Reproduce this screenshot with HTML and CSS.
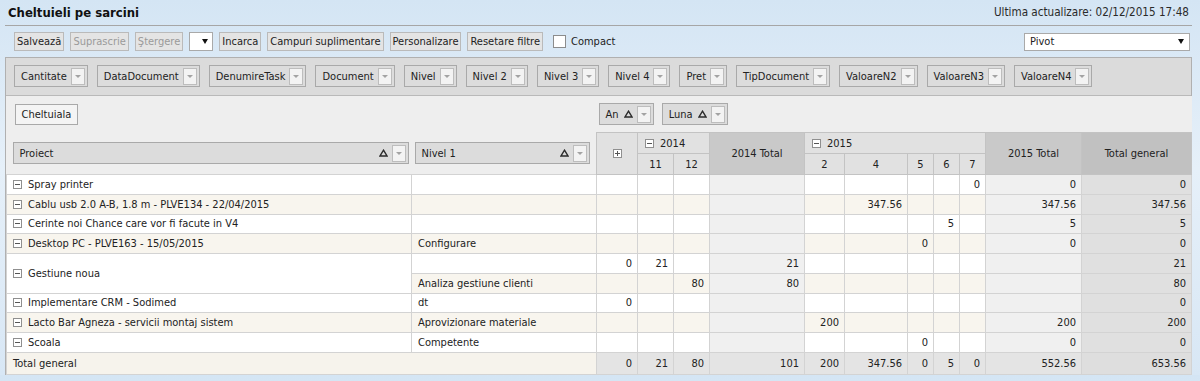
FILE: index.html
```html
<!DOCTYPE html>
<html>
<head>
<meta charset="utf-8">
<title>Cheltuieli pe sarcini</title>
<link rel="stylesheet" href="styles.css">
</head>
<body>
<div class="page">

<div class="header">
  <div class="title">Cheltuieli pe sarcini</div>
  <div class="updated">Ultima actualizare: 02/12/2015 17:48</div>
</div>

<div class="toolbar">
  <div class="actions">
    <span class="btn">Salvează</span>
    <span class="btn off">Suprascrie</span>
    <span class="btn off">Ştergere</span>
    <span class="combo small"><span class="combo-text"></span><span class="combo-arrow"></span></span>
    <span class="btn">Incarca</span>
    <span class="btn">Campuri suplimentare</span>
    <span class="btn">Personalizare</span>
    <span class="btn">Resetare filtre</span>
    <label class="check"><span class="box"></span>Compact</label>
  </div>
  <span class="combo wide"><span class="combo-text">Pivot</span><span class="combo-arrow"></span></span>
</div>

<div class="pivot">
  <div class="filter-area">
    <span class="field">Cantitate<span class="drop"></span></span>
    <span class="field">DataDocument<span class="drop"></span></span>
    <span class="field">DenumireTask<span class="drop"></span></span>
    <span class="field">Document<span class="drop"></span></span>
    <span class="field">Nivel<span class="drop"></span></span>
    <span class="field">Nivel 2<span class="drop"></span></span>
    <span class="field">Nivel 3<span class="drop"></span></span>
    <span class="field">Nivel 4<span class="drop"></span></span>
    <span class="field">Pret<span class="drop"></span></span>
    <span class="field">TipDocument<span class="drop"></span></span>
    <span class="field">ValoareN2<span class="drop"></span></span>
    <span class="field">ValoareN3<span class="drop"></span></span>
    <span class="field">ValoareN4<span class="drop"></span></span>
  </div>

  <table class="grid">
    <colgroup>
      <col class="c-name"><col class="c-lvl">
      <col class="c-exp"><col class="c-m11"><col class="c-m12"><col class="c-t14">
      <col class="c-m2"><col class="c-m4"><col class="c-m5"><col class="c-m6"><col class="c-m7">
      <col class="c-t15"><col class="c-tg">
    </colgroup>
    <tr class="area-row">
      <td colspan="2" class="area data-area"><span class="field light">Cheltuiala</span></td>
      <td colspan="11" class="area col-area">
        <span class="field">An<svg class="sort" width="9" height="8" viewBox="0 0 9 8"><path d="M4.5 1.2 L8 7 H1 Z" fill="none" stroke="#2b2b2b" stroke-width="1.4" stroke-linejoin="miter"/></svg><span class="drop"></span></span>
        <span class="field">Luna<svg class="sort" width="9" height="8" viewBox="0 0 9 8"><path d="M4.5 1.2 L8 7 H1 Z" fill="none" stroke="#2b2b2b" stroke-width="1.4" stroke-linejoin="miter"/></svg><span class="drop"></span></span>
      </td>
    </tr>
    <tr class="hrow">
      <td rowspan="2" class="area row-field first"><span class="field block"><span class="fname">Proiect</span><svg class="sort" width="9" height="8" viewBox="0 0 9 8"><path d="M4.5 1.2 L8 7 H1 Z" fill="none" stroke="#2b2b2b" stroke-width="1.4" stroke-linejoin="miter"/></svg><span class="drop"></span></span></td>
      <td rowspan="2" class="area row-field"><span class="field block"><span class="fname">Nivel 1</span><svg class="sort" width="9" height="8" viewBox="0 0 9 8"><path d="M4.5 1.2 L8 7 H1 Z" fill="none" stroke="#2b2b2b" stroke-width="1.4" stroke-linejoin="miter"/></svg><span class="drop"></span></span></td>
      <th rowspan="2" class="hdr"><span class="tg plus"></span></th>
      <th colspan="2" class="hdr year"><span class="tg"></span>2014</th>
      <th rowspan="2" class="hdr total">2014 Total</th>
      <th colspan="5" class="hdr year"><span class="tg"></span>2015</th>
      <th rowspan="2" class="hdr total">2015 Total</th>
      <th rowspan="2" class="hdr grand">Total general</th>
    </tr>
    <tr class="hrow">
      <th class="hdr">11</th><th class="hdr">12</th>
      <th class="hdr">2</th><th class="hdr">4</th><th class="hdr">5</th><th class="hdr">6</th><th class="hdr">7</th>
    </tr>

    <tr>
      <td class="name"><span class="tg"></span>Spray printer</td><td class="lvl"></td>
      <td></td><td></td><td></td><td class="tot"></td>
      <td></td><td></td><td></td><td></td><td>0</td>
      <td class="tot">0</td><td class="gt">0</td>
    </tr>
    <tr class="alt">
      <td class="name"><span class="tg"></span>Cablu usb 2.0 A-B, 1.8 m - PLVE134 - 22/04/2015</td><td class="lvl"></td>
      <td></td><td></td><td></td><td class="tot"></td>
      <td></td><td>347.56</td><td></td><td></td><td></td>
      <td class="tot">347.56</td><td class="gt">347.56</td>
    </tr>
    <tr>
      <td class="name"><span class="tg"></span>Cerinte noi Chance care vor fi facute in V4</td><td class="lvl"></td>
      <td></td><td></td><td></td><td class="tot"></td>
      <td></td><td></td><td></td><td>5</td><td></td>
      <td class="tot">5</td><td class="gt">5</td>
    </tr>
    <tr class="alt">
      <td class="name"><span class="tg"></span>Desktop PC - PLVE163 - 15/05/2015</td><td class="lvl">Configurare</td>
      <td></td><td></td><td></td><td class="tot"></td>
      <td></td><td></td><td>0</td><td></td><td></td>
      <td class="tot">0</td><td class="gt">0</td>
    </tr>
    <tr>
      <td class="name" rowspan="2"><span class="tg"></span>Gestiune noua</td><td class="lvl"></td>
      <td>0</td><td>21</td><td></td><td class="tot">21</td>
      <td></td><td></td><td></td><td></td><td></td>
      <td class="tot"></td><td class="gt">21</td>
    </tr>
    <tr class="alt">
      <td class="lvl">Analiza gestiune clienti</td>
      <td></td><td></td><td>80</td><td class="tot">80</td>
      <td></td><td></td><td></td><td></td><td></td>
      <td class="tot"></td><td class="gt">80</td>
    </tr>
    <tr>
      <td class="name"><span class="tg"></span>Implementare CRM - Sodimed</td><td class="lvl">dt</td>
      <td>0</td><td></td><td></td><td class="tot"></td>
      <td></td><td></td><td></td><td></td><td></td>
      <td class="tot"></td><td class="gt">0</td>
    </tr>
    <tr class="alt">
      <td class="name"><span class="tg"></span>Lacto Bar Agneza - servicii montaj sistem</td><td class="lvl">Aprovizionare materiale</td>
      <td></td><td></td><td></td><td class="tot"></td>
      <td>200</td><td></td><td></td><td></td><td></td>
      <td class="tot">200</td><td class="gt">200</td>
    </tr>
    <tr>
      <td class="name"><span class="tg"></span>Scoala</td><td class="lvl">Competente</td>
      <td></td><td></td><td></td><td class="tot"></td>
      <td></td><td></td><td>0</td><td></td><td></td>
      <td class="tot">0</td><td class="gt">0</td>
    </tr>
    <tr class="sum">
      <td class="name label" colspan="2">Total general</td>
      <td>0</td><td>21</td><td>80</td><td>101</td>
      <td>200</td><td>347.56</td><td>0</td><td>5</td><td>0</td>
      <td>552.56</td><td class="gt">653.56</td>
    </tr>
  </table>
</div>

</div>
</body>
</html>
```

FILE: styles.css
```css
/* Pivot report page */

body
{ margin: 0;
  background: linear-gradient(to bottom, #d4e5f4 0, #e6f0f9 45%, #d8e7f5 100%);
  font-family: "DejaVu Sans Condensed", "DejaVu Sans", sans-serif;
  font-size: 11px;
  color: #222;
}

.page
{ margin-left: 5px;
  width: 1187px;
}

/* Header */

.header
{ display: flex;
  justify-content: space-between;
  align-items: center;
  box-sizing: border-box;
  height: 26px;
  padding: 0 3px 1px 3px;
  border-bottom: 1px solid #a6a6a6;
}

.title
{ font-size: 13px;
  font-weight: bold;
  color: #111;
}

.updated
{ font-size: 11.6px;
  color: #2a2a2a;
}

/* Toolbar */

.toolbar
{ display: flex;
  justify-content: space-between;
  align-items: center;
  height: 31px;
  padding: 0 2px 0 9px;
}

.actions
{ display: flex;
  align-items: center;
  gap: 6px;
}

.btn
{ display: inline-flex;
  align-items: center;
  box-sizing: border-box;
  height: 19px;
  padding: 0 2px;
  border: 1px solid #bababa;
  background: #e4e4e4;
}

.btn.off
{ color: #9a9a9a;
}

.combo
{ display: inline-flex;
  align-items: center;
  justify-content: space-between;
  box-sizing: border-box;
  height: 19px;
  padding: 0 5px 0 5px;
  border: 1px solid #a9a9a9;
  background: #fff;
}

.combo.small
{ width: 24px;
  padding-right: 4px;
}

.combo.wide
{ width: 166px;
  height: 18px;
}

.combo-arrow
{ width: 0;
  height: 0;
  border-left: 3px solid transparent;
  border-right: 3px solid transparent;
  border-top: 5px solid #111;
}

.check
{ display: inline-flex;
  align-items: center;
  margin-left: 4px;
}

.check .box
{ width: 11px;
  height: 11px;
  margin-right: 5px;
  border: 1px solid #8c8c8c;
  background: #fff;
}

/* Pivot grid */

.pivot
{ box-sizing: border-box;
  width: 1187px;
  border: 1px solid #b0b0b0;
  border-bottom: 0;
  background: #eeeeee;
}

.filter-area
{ display: flex;
  gap: 9px;
  height: 22px;
  padding: 7px 8px 8px 8px;
  border-bottom: 1px solid #b9b9b9;
  background: #dbdbdb;
  white-space: nowrap;
}

.filter-area .field
{ margin: 0;
}

.field
{ display: inline-flex;
  align-items: center;
  box-sizing: border-box;
  height: 22px;
  margin-right: 5px;
  padding: 0 2px 0 6px;
  border: 1px solid #a9a9a9;
  background: #dcdcdc;
  vertical-align: middle;
}

.field.light
{ height: 21px;
  padding-right: 6px;
  background: #f4f4f4;
}

.field.block
{ display: flex;
  margin: 0;
}

.fname
{ flex: 1;
}

.drop
{ display: flex;
  align-items: center;
  justify-content: center;
  box-sizing: border-box;
  width: 14px;
  height: 17px;
  margin-left: 4px;
  border: 1px solid #bdbdbd;
  background: #f3f3f3;
}

.drop::after
{ content: "";
  border-left: 3px solid transparent;
  border-right: 3px solid transparent;
  border-top: 3px solid #a3a3a3;
}

.sort
{ margin-left: 5px;
  margin-right: 0;
}

.grid
{ width: 1185px;
  table-layout: fixed;
  border-collapse: collapse;
}

col.c-name { width: 405px; }
col.c-lvl { width: 185px; }
col.c-exp { width: 41px; }
col.c-m11, col.c-m12 { width: 36px; }
col.c-t14 { width: 95px; }
col.c-m2 { width: 40px; }
col.c-m4 { width: 63px; }
col.c-m5, col.c-m6, col.c-m7 { width: 26px; }
col.c-t15 { width: 96px; }
col.c-tg { width: 110px; }

.grid td, .grid th
{ height: 18.78px;
  padding: 0 5px;
  border: 1px solid #d3d3d3;
  background: #fff;
  text-align: right;
  white-space: nowrap;
  overflow: hidden;
  font-weight: normal;
}

.grid td.area
{ border: 0;
  background: #eeeeee;
  text-align: left;
  padding: 0;
}

.area-row td
{ height: 36px;
}

.data-area
{ padding-left: 8px !important;
}

.col-area
{ padding-left: 2px !important;
}

.row-field
{ padding: 0 6px 0 3px !important;
}

.row-field.first
{ padding: 0 3px 0 6px !important;
}

.grid th.hdr
{ height: 20px;
  border-color: #c3c3c3;
  background: #e1e1e1;
  text-align: center;
}

.grid th.year
{ text-align: left;
  padding-left: 7px;
}

.grid th.total
{ background: #c9c9c9;
}

.grid th.grand
{ background: #c1c1c1;
}

.grid td.name, .grid td.lvl
{ text-align: left;
  padding-left: 6px;
}

.grid tr.alt td
{ background: #f8f5ee;
}

.grid td.tot, .grid tr.alt td.tot
{ background: #f0f0f0;
}

.grid td.gt, .grid tr.alt td.gt
{ background: #e0e0e0;
}

.grid tr.sum td
{ height: 21px;
  background: #e4e4e4;
}

.grid tr.sum td.label
{ background: #f6f3ec;
}

.grid tr.sum td.gt
{ background: #dedede;
}

/* Expand / collapse boxes */

.tg
{ display: inline-block;
  width: 7px;
  height: 7px;
  margin-right: 6px;
  border: 1px solid #8f8f8f;
  background: linear-gradient(#555, #555) center / 5px 1px no-repeat, #fff;
  vertical-align: -1px;
}

.tg.plus
{ margin: 0;
  background: linear-gradient(#555, #555) center / 5px 1px no-repeat,
              linear-gradient(#555, #555) center / 1px 5px no-repeat, #fff;
}
```
